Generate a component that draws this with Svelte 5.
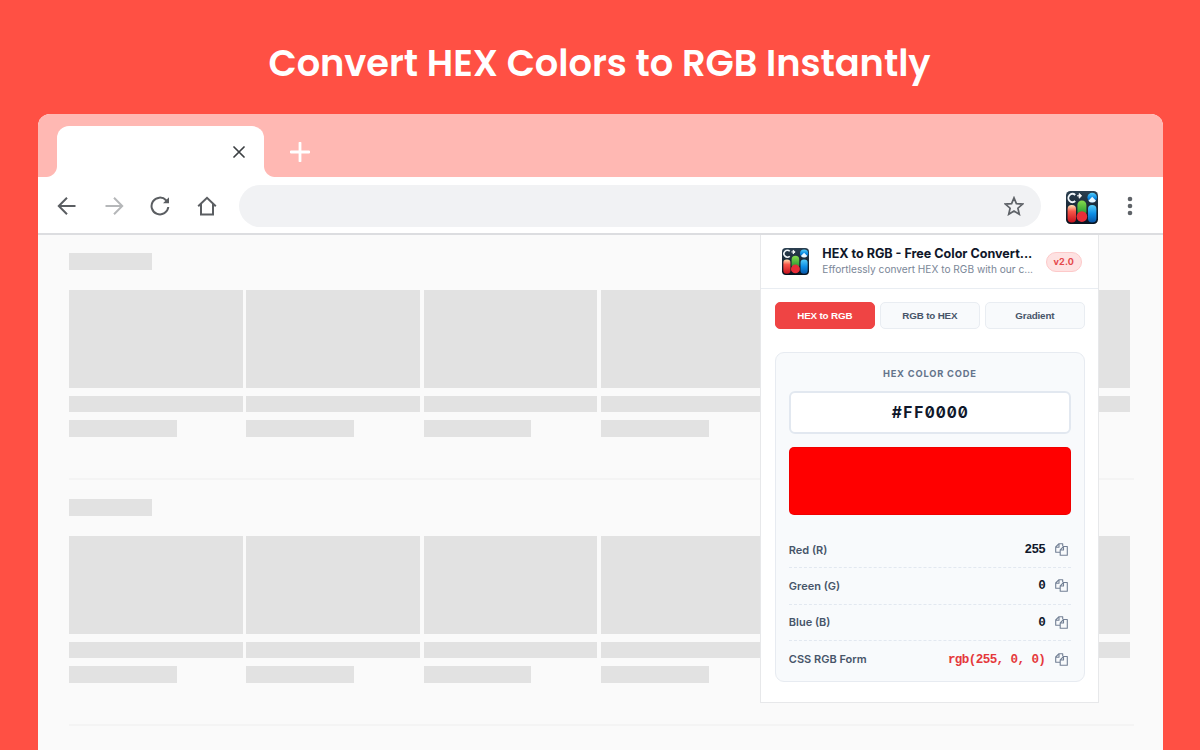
<script>
  const words = ['Convert', 'HEX', 'Colors', 'to', 'RGB', 'Instantly'];
  const sections = [0, 1];
  const cards = [0, 1, 2, 3, 4, 5];
  const tabs = ['HEX to RGB', 'RGB to HEX', 'Gradient'];

  let activeTab = $state('HEX to RGB');
  let hex = $state('#FF0000');

  let channels = $derived([1, 3, 5].map((i) => parseInt(hex.slice(i, i + 2), 16)));
  let rows = $derived([
    { label: 'Red (R)', value: channels[0] },
    { label: 'Green (G)', value: channels[1] },
    { label: 'Blue (B)', value: channels[2] },
    { label: 'CSS RGB Form', value: `rgb(${channels.join(', ')})`, accent: true }
  ]);

  function copy(value) {
    navigator.clipboard?.writeText(String(value));
  }
</script>

{#snippet logo(id)}
  <svg class="logo" viewBox="0 0 32 33" preserveAspectRatio="none">
    <defs>
      <linearGradient id="{id}-bg" x1="0" y1="0" x2="0" y2="1">
        <stop offset="0" stop-color="#2b3f50" />
        <stop offset="1" stop-color="#07131f" />
      </linearGradient>
      <linearGradient id="{id}-red" x1="0" y1="0" x2="0" y2="1">
        <stop offset="0" stop-color="#ffe3b4" />
        <stop offset="0.35" stop-color="#f8584a" />
        <stop offset="1" stop-color="#c5101c" />
      </linearGradient>
      <linearGradient id="{id}-green" x1="0" y1="0" x2="0" y2="1">
        <stop offset="0" stop-color="#86dc4c" />
        <stop offset="1" stop-color="#128a2e" />
      </linearGradient>
      <linearGradient id="{id}-blue" x1="0" y1="0" x2="0" y2="1">
        <stop offset="0" stop-color="#56cdf8" />
        <stop offset="0.5" stop-color="#0d8ee6" />
        <stop offset="1" stop-color="#0754a5" />
      </linearGradient>
    </defs>
    <rect width="32" height="33" rx="4.5" fill="url(#{id}-bg)" />
    <path d="M9.2 4A4 4.2 0 1 0 9.2 10" fill="none" stroke="#f2f7fa" stroke-width="1.9" />
    <path d="M11 4.8h3M13.2 2.6l2.4 2.2-2.4 2.4z" fill="#fff" stroke="#fff" stroke-width="1" />
    <circle cx="26.2" cy="6.6" r="4.8" fill="url(#{id}-blue)" />
    <path d="M22.4 9.7l3.8-4 3.8 4a4.8 4.8 0 0 1-7.6 0z" fill="#e9f7ff" />
    <rect x="1.6" y="14" width="8.4" height="17.6" rx="4" fill="url(#{id}-red)" />
    <rect x="11.4" y="9.5" width="9" height="16" rx="4.5" fill="url(#{id}-green)" />
    <circle cx="15.9" cy="25.6" r="5.3" fill="#e72d38" />
    <rect x="22" y="14" width="8.4" height="17.6" rx="4" fill="url(#{id}-blue)" />
  </svg>
{/snippet}

<div class="page">
  <h1>
    {#each words as word}<span>{word}</span>{' '}{/each}
  </h1>

  <div class="browser">
    <div class="tab-strip">
      <div class="browser-tab">
        <svg width="12" height="12" viewBox="0 0 12 12">
          <path d="M1 1l10 10M11 1L1 11" />
        </svg>
      </div>
      <svg class="new-tab" width="20" height="20" viewBox="0 0 20 20">
        <path d="M10 1v18M1 10h18" />
      </svg>
    </div>

    <div class="toolbar">
      <svg class="nav" viewBox="0 0 20 20"><path d="M18.5 10H2M10 1.8L1.8 10l8.2 8.2" /></svg>
      <svg class="nav muted" viewBox="0 0 20 20"><path d="M1.5 10H18M10 1.8l8.2 8.2-8.2 8.2" /></svg>
      <svg class="nav" viewBox="0 0 20 20">
        <path d="M18.3 11A8.4 8.4 0 1 1 16.1 4.3L17.8 6" />
        <path class="solid" d="M19 1.2v6h-6z" />
      </svg>
      <svg class="nav" viewBox="0 0 20 20">
        <path d="M1.2 10.2L10 1.8l8.8 8.4M4 8v10.4h12V8" />
      </svg>
      <div class="address">
        <svg width="20" height="20" viewBox="0 0 20 20">
          <path d="M10 1.8l2.4 5.8 6.2.5-4.7 4.1 1.4 6.1L10 15l-5.3 3.3 1.4-6.1L1.4 8.1l6.2-.5z" />
        </svg>
      </div>
      <div class="extension">{@render logo('toolbar')}</div>
      <svg class="dots" width="6" height="20" viewBox="0 0 6 20">
        <circle cx="3" cy="3" r="2.3" />
        <circle cx="3" cy="10" r="2.3" />
        <circle cx="3" cy="17" r="2.3" />
      </svg>
    </div>

    <div class="viewport">
      {#each sections as section}
        <section>
          <div class="block heading"></div>
          <div class="cards">
            {#each cards as card}
              <div class="card">
                <div class="block thumb"></div>
                <div class="block line"></div>
                <div class="block line short"></div>
              </div>
            {/each}
          </div>
        </section>
      {/each}

      <div class="popup">
        <header>
          {@render logo('popup')}
          <div class="titles">
            <h2>HEX to RGB - Free Color Convert...</h2>
            <p>Effortlessly convert HEX to RGB with our c...</p>
          </div>
          <span class="version">v2.0</span>
        </header>

        <div class="tabs">
          {#each tabs as tab}
            <button class:active={activeTab === tab} onclick={() => (activeTab = tab)}>{tab}</button>
          {/each}
        </div>

        <div class="panel">
          <div class="caption">HEX COLOR CODE</div>
          <div class="hex-value">
            {#each hex as char}<span>{char}</span>{/each}
          </div>
          <div class="swatch" style="background: {hex}"></div>
          {#each rows as row}
            <div class="row">
              <span class="label">{row.label}</span>
              <span class="value" class:accent={row.accent}>{row.value}</span>
              <button class="copy" aria-label="Copy" onclick={() => copy(row.value)}>
                <svg width="13" height="13" viewBox="0 0 13 13">
                  <path d="M5 9.2H.7V4L4 .7h3.7v2.6M4 .9v3.3H.8" />
                  <path d="M5.2 6.8L8.6 3.5h3.7v8.8H5.2zM8.5 3.6V7H5.3" />
                </svg>
              </button>
            </div>
          {/each}
        </div>
      </div>
    </div>
  </div>
</div>

<style>
  :global(body) {
    margin: 0;
    overflow: hidden;
  }

  .page {
    box-sizing: border-box;
    width: 1200px;
    height: 750px;
    padding: 0 37.5px;
    overflow: hidden;
    background: #ff5044;
    font-family: Inter, 'Liberation Sans', sans-serif;
    display: flex;
    flex-direction: column;
  }

  h1 {
    margin: 0 1px 0 0;
    height: 114.4px;
    padding-top: 37px;
    box-sizing: border-box;
    color: #fff;
    font: 600 36.8px/52px Poppins, Inter, sans-serif;
    letter-spacing: -0.04px;
    text-align: center;
    white-space: nowrap;
  }

  .browser {
    flex: 1;
    display: flex;
    flex-direction: column;
    border-radius: 12px 12px 0 0;
    overflow: hidden;
    background: #fff;
  }

  .tab-strip {
    height: 63.1px;
    flex: none;
    box-sizing: border-box;
    padding: 12px 0 0 19px;
    display: flex;
    background: #ffb8b3;
  }

  .browser-tab {
    position: relative;
    width: 207.5px;
    box-sizing: border-box;
    padding-right: 19.5px;
    display: flex;
    align-items: center;
    justify-content: flex-end;
    background: #fff;
    border-radius: 12px 12px 0 0;
  }

  .browser-tab::before,
  .browser-tab::after {
    content: '';
    position: absolute;
    bottom: 0;
    width: 11px;
    height: 11px;
  }

  .browser-tab::before {
    left: -11px;
    background: radial-gradient(circle at 0 0, transparent 10.5px, #fff 11.5px);
  }

  .browser-tab::after {
    right: -11px;
    background: radial-gradient(circle at 100% 0, transparent 10.5px, #fff 11.5px);
  }

  .browser-tab svg {
    fill: none;
    stroke: #3c4043;
    stroke-width: 1.7;
    stroke-linecap: round;
  }

  .new-tab {
    align-self: center;
    margin-left: 26px;
    fill: none;
    stroke: #fff;
    stroke-width: 2.8;
    stroke-linecap: round;
  }

  .toolbar {
    height: 57.5px;
    flex: none;
    box-sizing: border-box;
    padding: 1px 30px 0 19.5px;
    border-bottom: 2px solid #dcdde0;
    display: flex;
    align-items: center;
  }

  .nav {
    width: 20px;
    height: 20px;
    margin-right: 26.5px;
    flex: none;
    fill: none;
    stroke: #5b5e62;
    stroke-width: 2;
  }

  .nav.muted {
    stroke: #b5b7b9;
  }

  .nav .solid {
    fill: #5b5e62;
    stroke: none;
  }

  .address {
    width: 802px;
    height: 42px;
    flex: none;
    margin-left: -4px;
    box-sizing: border-box;
    padding-right: 17px;
    display: flex;
    align-items: center;
    justify-content: flex-end;
    border-radius: 21px;
    background: #f1f2f4;
  }

  .address svg {
    fill: none;
    stroke: #5f6368;
    stroke-width: 1.7;
  }

  .extension {
    width: 32px;
    height: 33px;
    margin-left: 25px;
    padding-top: 3px;
  }

  .logo {
    display: block;
    flex: none;
    width: 100%;
    height: 100%;
  }

  .dots {
    margin-left: auto;
    fill: #5f6368;
  }

  .viewport {
    position: relative;
    flex: 1;
    background: #fafafa;
    padding: 0 29px 0 31.5px;
  }

  section {
    box-sizing: border-box;
    height: 246px;
    padding-top: 18px;
    border-bottom: 2px solid #f4f4f4;
  }

  section:first-child {
    height: 245px;
  }

  section + section {
    padding-top: 19px;
  }

  .block {
    background: #e2e2e2;
  }

  .heading {
    width: 83px;
    height: 17px;
    margin-bottom: 20px;
  }

  .cards {
    display: grid;
    grid-template-columns: repeat(6, 173.7px);
    column-gap: 3.7px;
  }

  .thumb {
    height: 98px;
  }

  .line {
    height: 16px;
    margin-top: 8px;
  }

  .line.short {
    width: 62%;
    height: 17px;
  }

  .popup {
    position: absolute;
    top: 0;
    left: 722.8px;
    width: 339px;
    height: 468px;
    box-sizing: border-box;
    border: 1px solid #e7e8ea;
    border-top: 0;
    background: #fff;
  }

  header {
    height: 54px;
    box-sizing: border-box;
    padding: 0 16px 0 20.5px;
    border-bottom: 1px solid #e9edf2;
    display: flex;
    align-items: center;
  }

  header .logo {
    width: 27px;
    height: 27px;
  }

  .titles {
    width: 213.5px;
    margin-left: 13.5px;
    flex: none;
    white-space: nowrap;
  }

  h2 {
    margin: 0;
    color: #0f172a;
    font-size: 12.55px;
    line-height: 17px;
    font-weight: 700;
  }

  .titles p {
    margin: 0;
    color: #7b8798;
    font-size: 10.15px;
    line-height: 15px;
  }

  .version {
    width: 36px;
    height: 20px;
    margin: 1px 0 0 10px;
    box-sizing: border-box;
    border: 1px solid #fdc9c9;
    border-radius: 10px;
    background: #fee2e2;
    color: #e5484a;
    font-size: 9px;
    line-height: 18px;
    font-weight: 700;
    letter-spacing: 0.2px;
    text-align: center;
    flex: none;
  }

  .tabs {
    padding: 13px 13.5px 0;
    display: grid;
    grid-template-columns: repeat(3, 1fr);
    gap: 5px;
  }

  .tabs button {
    height: 27px;
    padding: 0;
    border: 1px solid #e9edf2;
    border-radius: 5px;
    background: #f8fafc;
    color: #475569;
    font: 600 9.8px 'Liberation Sans', Arial, sans-serif;
    letter-spacing: -0.15px;
  }

  .tabs button.active {
    border-color: #ef4444;
    background: #ef4444;
    color: #fff;
  }

  .panel {
    margin: 23px 13.5px 0;
    height: 330.5px;
    box-sizing: border-box;
    padding: 13px;
    border: 1px solid #e7ebf1;
    border-radius: 9px;
    background: #f8fafc;
  }

  .caption {
    color: #64748b;
    font-size: 9.3px;
    line-height: 16px;
    font-weight: 700;
    letter-spacing: 0.8px;
    text-align: center;
  }

  .hex-value {
    height: 43px;
    margin-top: 9px;
    box-sizing: border-box;
    border: 2px solid #e2e8f0;
    border-radius: 6px;
    display: flex;
    align-items: center;
    justify-content: center;
    background: #fff;
    color: #0f172a;
    font-size: 15.5px;
    font-weight: 700;
    font-feature-settings: 'zero', 'tnum';
  }

  .hex-value span {
    width: 11px;
    text-align: center;
  }

  .swatch {
    height: 68px;
    margin: 13px 0 17px;
    border-radius: 5px;
    box-shadow: inset 0 0 0 1px rgba(0, 0, 0, 0.06);
  }

  .row {
    height: 36.3px;
    box-sizing: border-box;
    border-bottom: 1px dashed #e2e8f0;
    display: flex;
    align-items: center;
  }

  .row:last-child {
    border-bottom: 0;
  }

  .label {
    color: #475569;
    font-size: 11px;
    font-weight: 600;
  }

  .value {
    margin-left: auto;
    padding-top: 1px;
    color: #0f172a;
    font: 700 12.6px 'Liberation Mono', monospace;
    letter-spacing: -0.6px;
  }

  .value.accent {
    color: #e5383b;
  }

  .copy {
    margin: 0 2.5px 0 10px;
    padding: 0;
    border: 0;
    background: none;
    display: flex;
  }

  .copy svg {
    fill: none;
    stroke: #738095;
    stroke-width: 1.1;
    stroke-linejoin: round;
  }
</style>
